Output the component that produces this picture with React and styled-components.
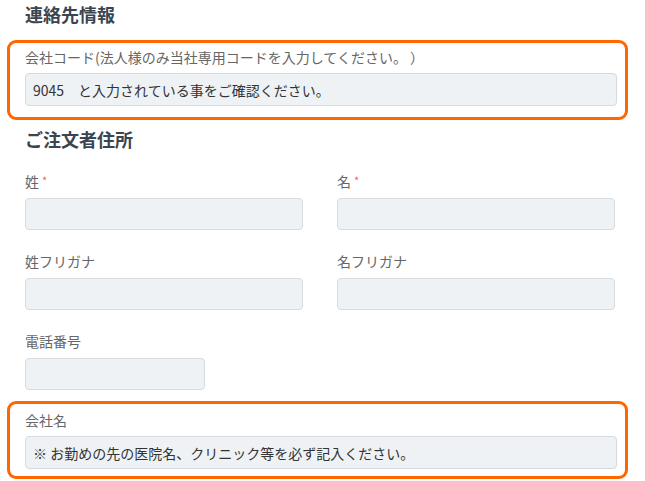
import React from "react";
import styled, { createGlobalStyle } from "styled-components";

const GlobalStyle = createGlobalStyle`
  html, body {
    margin: 0;
    padding: 0;
    background: #ffffff;
  }
  body {
    font-family: "Noto Sans CJK JP", "Noto Sans", "Liberation Sans", sans-serif;
    -webkit-font-smoothing: antialiased;
  }
  * { box-sizing: border-box; }
`;

const Page = styled.div`
  display: flex;
  flex-direction: column;
  align-items: flex-start;
  padding-top: 1px;
  width: 645px;
`;

const Heading = styled.h2`
  margin: ${(p) => p.$top || 0}px 0 0 25px;
  font-size: 18px;
  line-height: 27px;
  font-weight: 700;
  color: #3a4550;
`;

const Highlight = styled.div`
  margin: ${(p) => p.$top}px 0 0 7px;
  width: 621px;
  border: 3px solid #ff6600;
  border-radius: 9px;
  padding: ${(p) => p.$pt}px 8px ${(p) => p.$pb}px 15px;
  display: flex;
  flex-direction: column;
  gap: ${(p) => p.$gap}px;
`;

const Label = styled.label`
  display: block;
  font-size: 14px;
  line-height: 19px;
  color: #666666;
`;

const Required = styled.span`
  color: #e3342f;
  opacity: 0.75;
  font-size: 11px;
  margin-left: 3px;
  vertical-align: 2px;
`;

const Input = styled.input`
  display: block;
  width: ${(p) => p.$w || "100%"};
  height: ${(p) => p.$h || 32}px;
  margin: 0;
  padding: 0 7px;
  background: #eef2f5;
  border: 1px solid #d5dbe1;
  border-radius: 4px;
  font-family: inherit;
  font-size: 14px;
  color: #333333;
  outline: none;
`;

const Grid = styled.div`
  margin: 18px 0 0 25px;
  display: grid;
  grid-template-columns: 278px 278px;
  column-gap: 34px;
  row-gap: 22px;
`;

const Field = styled.div`
  display: flex;
  flex-direction: column;
  gap: 7px;
`;

export default function App() {
  return (
    <>
      <GlobalStyle />
      <Page>
        <Heading>連絡先情報</Heading>
        <Highlight $top={12} $pt={5} $pb={11} $gap={6}>
          <Label>会社コード(法人様のみ当社専用コードを入力してください。 ）</Label>
          <Input $h={33} readOnly defaultValue="9045　と入力されている事をご確認ください。" />
        </Highlight>

        <Heading $top={6}>ご注文者住所</Heading>
        <Grid>
          <Field>
            <Label>
              姓<Required>*</Required>
            </Label>
            <Input readOnly />
          </Field>
          <Field>
            <Label>
              名<Required>*</Required>
            </Label>
            <Input readOnly />
          </Field>
          <Field>
            <Label>姓フリガナ</Label>
            <Input readOnly />
          </Field>
          <Field>
            <Label>名フリガナ</Label>
            <Input readOnly />
          </Field>
          <Field>
            <Label>電話番号</Label>
            <Input $w="180px" readOnly />
          </Field>
        </Grid>

        <Highlight $top={11} $pt={7} $pb={7} $gap={6}>
          <Label>会社名</Label>
          <Input $h={33} readOnly defaultValue="※ お勤めの先の医院名、クリニック等を必ず記入ください。" />
        </Highlight>
      </Page>
    </>
  );
}
